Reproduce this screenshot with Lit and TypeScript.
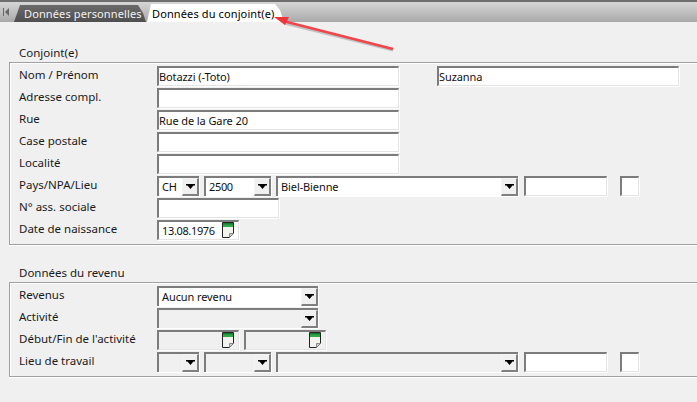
import { LitElement, html, css, svg } from "lit";
import { customElement } from "lit/decorators.js";

const calIcon = html`<svg class="cal" width="13" height="16" viewBox="0 0 13 16">
  <path d="M.5.5h11v11l-4 4h-7z" fill="#f2f2ee" stroke="#222"/>
  <rect x="1" y="1" width="10" height="4" fill="#2fa84a"/>
  <rect x="1" y="1" width="10" height="1.5" fill="#157a2c"/>
  <path d="M7.500 15.500v-4h4" fill="#cfcfcf" stroke="#888"/>
</svg>`;

const arrowIcon = html`<svg class="tri" width="9" height="5" viewBox="0 0 9 5"><path d="M0 0h9v1.500H7.500L4.500 5 1.500 1.500H0z" fill="#000"/></svg>`;

@customElement("app-root")
export class AppRoot extends LitElement {
  static styles = css`
    :host {
      display: block;
      position: relative;
      width: 697px;
      height: 402px;
      overflow: hidden;
      background: #f0f0f0;
      font-family: "Noto Sans", "DejaVu Sans", sans-serif;
      font-size: 11.5px;
      color: #1a1a1a;
    }
    .strip {
      height: 22px;
      box-sizing: border-box;
      border-top: 2px solid #6e6e6e;
      background: linear-gradient(#d6d6d6, #a9a9a9);
      display: flex;
      align-items: flex-end;
      padding-left: 2px;
    }
    .nav {
      width: 12px;
      height: 14px;
      display: flex;
      align-items: center;
      align-self: center;
    }
    .tab {
      height: 17px;
      display: flex;
      align-items: center;
      font-size: 11px;
      letter-spacing: 0.12px;
      box-sizing: border-box;
      white-space: nowrap;
    }
    .tab.off {
      width: 132px;
      padding-left: 10px;
      color: #f2f2f2;
      background: linear-gradient(#6a6a6a, #4f4f4f);
      clip-path: polygon(0 100%, 6px 0, 124px 0, 129px 8px, 132px 100%);
    }
    .tab.on {
      width: 137px;
      height: 18px;
      margin-left: 1px;
      padding-left: 5px;
      color: #000;
      background: #fff;
      clip-path: polygon(0 100%, 4px 0, 128px 0, 133px 6px, 137px 100%);
    }
    .title {
      height: 14px;
      line-height: 14px;
      padding-left: 19px;
    }
    .title.first { margin-top: 24px; }
    .title.second { margin-top: 21px; }
    .box {
      margin: 2px 0 0 9px;
      box-sizing: border-box;
      border: solid #a0a0a0;
      border-width: 1px 0 1px 1px;
      box-shadow: inset 1px 1px 0 #fff, 0 1px 0 #fff;
      padding: 3px 0 0 9px;
      display: flex;
      flex-direction: column;
      gap: 2px;
    }
    .box.a { height: 183px; }
    .box.b { height: 95px; }
    .row {
      display: flex;
      height: 20px;
      align-items: flex-start;
    }
    .label {
      width: 138px;
      flex: none;
      line-height: 17px;
      white-space: nowrap;
    }
    .f {
      box-sizing: border-box;
      height: 20px;
      flex: none;
      display: flex;
      align-items: center;
      background: #fff;
      border-style: solid;
      border-width: 2px 1px 1px 2px;
      border-color: #7c7c7c #e4e4e4 #e4e4e4 #7c7c7c;
      box-shadow: 1px 1px 0 #fff;
      padding-bottom: 1px;
      color: #111;
      font-size: 11px;
      letter-spacing: -0.1px;
      white-space: nowrap;
      overflow: hidden;
    }
    .f.off { background: #f0f0f0; }
    .f.pad { padding-left: 3px; }
    .f.num { letter-spacing: -0.35px; }
    .spacer { flex: 1; }
    .btn {
      box-sizing: border-box;
      width: 17px;
      height: 18px;
      flex: none;
      margin-bottom: -1px;
      background: #f0f0f0;
      border-style: solid;
      border-width: 1px 2px 2px 1px;
      border-color: #f4f4f4 #808080 #808080 #f4f4f4;
      display: flex;
      align-items: center;
      justify-content: center;
    }
    .f.combo { border-right: 0; border-bottom: 0; height: 20px; }
    .cal { flex: none; margin-right: 3px; }
    .g5 { margin-left: 5px; }
    .g6 { margin-left: 6px; }
    .g13 { margin-left: 13px; }
    .g38 { margin-left: 38px; }
    .w19 { width: 19px; } .w42 { width: 42px; } .w67 { width: 67px; }
    .w82 { width: 82px; } .w83 { width: 83px; } .w122 { width: 122px; }
    .w161 { width: 161px; } .w242 { width: 242px; }
    .overlay { position: absolute; left: 0; top: 0; pointer-events: none; }
  `;

  private input(w: string, v = "", extra = "") {
    return html`<div class="f ${w} ${extra}">${v}</div>`;
  }
  private combo(w: string, v = "", extra = "") {
    return html`<div class="f combo pad ${w} ${extra}"><span>${v}</span><span class="spacer"></span><span class="btn">${arrowIcon}</span></div>`;
  }
  private date(v = "", extra = "") {
    return html`<div class="f pad num w82 ${extra}"><span>${v}</span><span class="spacer"></span>${calIcon}</div>`;
  }

  render() {
    return html`
      <div class="strip">
        <span class="nav"><svg width="8" height="8" viewBox="0 0 8 8"><path d="M1 0h1v8H1zM7 0v8L3 4z" fill="#666"/></svg></span>
        <div class="tab off">Données personnelles</div>
        <div class="tab on">Données du conjoint(e)</div>
      </div>

      <div class="title first">Conjoint(e)</div>
      <div class="box a">
        <div class="row"><span class="label">Nom / Prénom</span>${this.input("w242", "Botazzi (-Toto)")}${this.input("w242", "Suzanna", "g38")}</div>
        <div class="row"><span class="label">Adresse compl.</span>${this.input("w242")}</div>
        <div class="row"><span class="label">Rue</span>${this.input("w242", "Rue de la Gare 20")}</div>
        <div class="row"><span class="label">Case postale</span>${this.input("w242")}</div>
        <div class="row"><span class="label">Localité</span>${this.input("w242")}</div>
        <div class="row"><span class="label">Pays/NPA/Lieu</span>${this.combo("w42", "CH")}${this.combo("w67", "2500", "g5 num")}${this.combo("w242", "Biel-Bienne", "g5")}${this.input("w83", "", "g6")}${this.input("w19", "", "g13")}</div>
        <div class="row"><span class="label">N° ass. sociale</span>${this.input("w122")}</div>
        <div class="row"><span class="label">Date de naissance</span>${this.date("13.08.1976")}</div>
      </div>

      <div class="title second">Données du revenu</div>
      <div class="box b">
        <div class="row"><span class="label">Revenus</span>${this.combo("w161", "Aucun revenu")}</div>
        <div class="row"><span class="label">Activité</span>${this.combo("w161", "", "off")}</div>
        <div class="row"><span class="label">Début/Fin de l'activité</span>${this.date("", "off")}${this.date("", "off g5")}</div>
        <div class="row"><span class="label">Lieu de travail</span>${this.combo("w42", "", "off")}${this.combo("w67", "", "off g5")}${this.combo("w242", "", "off g5")}${this.input("w83", "", "g6")}${this.input("w19", "", "g13")}</div>
      </div>

      <svg class="overlay" width="697" height="402" viewBox="0 0 697 402">
        ${svg`<path d="M393 50 L284 23" stroke="#00000030" stroke-width="3" fill="none"/>
        <path d="M393 49 L283 21" stroke="#f0454a" stroke-width="2.500" fill="none"/>
        <path d="M274 17 L289 17 L285 25 Z" fill="#f0353a"/>`}
      </svg>
    `;
  }
}
